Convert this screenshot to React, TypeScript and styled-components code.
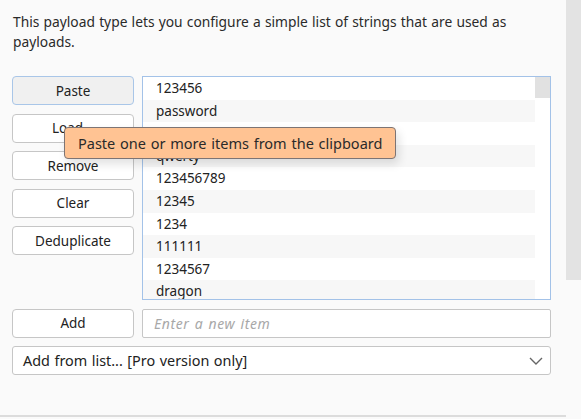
import styled, { createGlobalStyle } from "styled-components";

const GlobalStyle = createGlobalStyle`
  body {
    margin: 0;
    background: #fafafa;
    font-family: "Noto Sans", "Open Sans", sans-serif;
    color: #222;
  }
`;

const Page = styled.div`
  display: flex;
  height: 419px;
  overflow: hidden;
`;

const Content = styled.div`
  position: relative;
  flex: 1;
  display: flex;
  flex-direction: column;
  padding: 12px 15px 0 12px;
  border-bottom: 2px solid #dcdcdc;
  height: 403px;
`;

const Description = styled.p`
  margin: 0 0 24px 1px;
  font-size: 13.8px;
  line-height: 20px;
  word-spacing: 0.6px;
  color: #2a2a2a;
`;

const Grid = styled.div`
  display: grid;
  grid-template-columns: 122px 1fr;
  column-gap: 8px;
  row-gap: 8.5px;
`;

const ButtonColumn = styled.div`
  display: flex;
  flex-direction: column;
  gap: 8.5px;
`;

const Button = styled.button<{ $active?: boolean }>`
  height: 29px;
  border-radius: 4px;
  border: 1px solid ${({ $active }) => ($active ? "#a9c6e8" : "#c6c6c6")};
  background: ${({ $active }) => ($active ? "#f0f0f0" : "#ffffff")};
  font-family: inherit;
  font-size: 13.5px;
  color: #222;
  padding: 0;
`;

const ListBox = styled.div`
  height: 224px;
  box-sizing: border-box;
  border: 1px solid #a3c2e8;
  background: #fff;
  display: flex;
  overflow: hidden;
`;

const Rows = styled.div`
  flex: 1;
`;

const Row = styled.div<{ $odd: boolean }>`
  height: 22.6px;
  line-height: 22.6px;
  padding-left: 13px;
  font-size: 13.5px;
  background: ${({ $odd }) => ($odd ? "#f7f7f7" : "#ffffff")};
`;

const ListScroll = styled.div`
  width: 15px;
`;

const ListThumb = styled.div`
  height: 21px;
  background: #e1e1e1;
`;

const TextInput = styled.input`
  height: 29px;
  box-sizing: border-box;
  border: 1px solid #c6c6c6;
  border-radius: 2px;
  background: #fff;
  padding: 0 11px;
  font-family: inherit;
  font-size: 14px;

  &::placeholder {
    color: #a8a8a8;
    font-style: italic;
    letter-spacing: 0.6px;
    word-spacing: 1px;
  }
`;

const Select = styled.div`
  grid-column: 1 / 3;
  height: 29px;
  box-sizing: border-box;
  border: 1px solid #c6c6c6;
  border-radius: 3px;
  background: #fff;
  display: flex;
  align-items: center;
  justify-content: space-between;
  padding: 0 6px 0 10px;
  font-size: 14.4px;
  word-spacing: 0.8px;
`;

const Tooltip = styled.div`
  position: absolute;
  left: 64px;
  top: 127px;
  height: 32px;
  box-sizing: border-box;
  padding: 0 13px;
  display: flex;
  align-items: center;
  background: #ffc393;
  border: 1px solid #7d7474;
  border-radius: 4px;
  box-shadow: 3px 5px 10px rgba(0, 0, 0, 0.12);
  font-size: 14.5px;
  word-spacing: 1px;
  color: #2a2a2a;
  white-space: nowrap;
`;

const PageScroll = styled.div`
  width: 15px;
`;

const PageThumb = styled.div`
  height: 280px;
  background: #e3e3e3;
`;

const items = [
  "123456",
  "password",
  "12345678",
  "qwerty",
  "123456789",
  "12345",
  "1234",
  "111111",
  "1234567",
  "dragon",
];

export default function App() {
  return (
    <Page>
      <GlobalStyle />
      <Content>
        <Description>
          This payload type lets you configure a simple list of strings that
          are used as payloads.
        </Description>
        <Grid>
          <ButtonColumn>
            <Button $active>Paste</Button>
            <Button>Load...</Button>
            <Button>Remove</Button>
            <Button>Clear</Button>
            <Button>Deduplicate</Button>
          </ButtonColumn>
          <ListBox>
            <Rows>
              {items.map((item, i) => (
                <Row key={item} $odd={i % 2 === 1}>
                  {item}
                </Row>
              ))}
            </Rows>
            <ListScroll>
              <ListThumb />
            </ListScroll>
          </ListBox>
          <Button>Add</Button>
          <TextInput placeholder="Enter a new item" />
          <Select>
            <span>Add from list... [Pro version only]</span>
            <svg width="16" height="16" viewBox="0 0 16 16">
              <polyline
                points="2,5 8,11 14,5"
                fill="none"
                stroke="#666"
                strokeWidth="1.4"
              />
            </svg>
          </Select>
        </Grid>
        <Tooltip>Paste one or more items from the clipboard</Tooltip>
      </Content>
      <PageScroll>
        <PageThumb />
      </PageScroll>
    </Page>
  );
}
